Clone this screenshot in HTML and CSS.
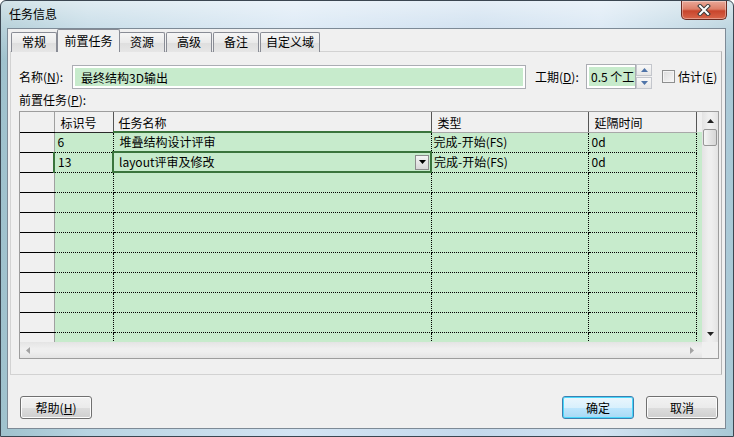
FILE: index.html
```html
<!DOCTYPE html>
<html lang="zh-CN">
<head>
    <meta charset="UTF-8">
    <title>任务信息</title>
    <link rel="stylesheet" href="styles.css">
</head>
<body>

<div class="window">
    <div class="titlebar">
        <span class="title">任务信息</span>
        <button class="close-btn" title="关闭">
            <svg width="16" height="12" viewBox="0 0 16 12">
                <path d="M4 2 L12 10 M12 2 L4 10" stroke="#3a3a3a" stroke-width="4" stroke-linecap="square"/>
                <path d="M4 2 L12 10 M12 2 L4 10" stroke="#fff" stroke-width="2" stroke-linecap="square"/>
            </svg>
        </button>
    </div>

    <div class="client">
        <div class="tabs">
            <div class="tab">常规</div>
            <div class="tab active">前置任务</div>
            <div class="tab">资源</div>
            <div class="tab">高级</div>
            <div class="tab">备注</div>
            <div class="tab">自定义域</div>
        </div>

        <div class="panel">
            <div class="field-row">
                <label class="lbl-name">名称(<u>N</u>):</label>
                <div class="textbox name-box"><span>最终结构3D输出</span></div>
                <label class="lbl-dur">工期(<u>D</u>):</label>
                <div class="textbox dur-box"><span>0.5 个工</span></div>
                <div class="spin">
                    <div class="spin-btn">
                        <svg width="7" height="4" viewBox="0 0 7 4"><path d="M0 4 L3.5 0 L7 4 Z" fill="#4f74a8"/></svg>
                    </div>
                    <div class="spin-btn">
                        <svg width="7" height="4" viewBox="0 0 7 4"><path d="M0 0 L3.5 4 L7 0 Z" fill="#4f74a8"/></svg>
                    </div>
                </div>
                <span class="checkbox"></span>
                <label class="lbl-est">估计(<u>E</u>)</label>
            </div>

            <div class="grid-label">前置任务(<u>P</u>):</div>

            <div class="grid">
                <div class="grid-main">
                    <div class="table-wrap">
                        <table class="pred-table">
                            <colgroup>
                                <col class="c-head">
                                <col class="c-id">
                                <col class="c-name">
                                <col class="c-type">
                                <col class="c-lag">
                                <col class="c-fill">
                            </colgroup>
                            <thead>
                                <tr>
                                    <th class="rowhead"></th>
                                    <th>标识号</th>
                                    <th class="col-active">任务名称</th>
                                    <th class="th-light">类型</th>
                                    <th class="th-light">延隔时间</th>
                                    <th class="th-fill"></th>
                                </tr>
                            </thead>
                            <tbody>
                                <tr>
                                    <td class="rowhead"></td>
                                    <td class="id">6</td>
                                    <td class="name">堆叠结构设计评审</td>
                                    <td class="type">完成-开始(FS)</td>
                                    <td class="lag">0d</td>
                                    <td class="fill"></td>
                                </tr>
                                <tr>
                                    <td class="rowhead"></td>
                                    <td class="id row-active">13</td>
                                    <td class="name cell-active">
                                        <div class="editor">
                                            <span class="editor-text">layout评审及修改</span>
                                            <span class="dropdown">
                                                <svg width="7" height="4" viewBox="0 0 7 4"><path d="M0 0 L3.5 4 L7 0 Z" fill="#000"/></svg>
                                            </span>
                                        </div>
                                    </td>
                                    <td class="type">完成-开始(FS)</td>
                                    <td class="lag">0d</td>
                                    <td class="fill"></td>
                                </tr>
                                <tr><td class="rowhead"></td><td></td><td></td><td></td><td></td><td class="fill"></td></tr>
                                <tr><td class="rowhead"></td><td></td><td></td><td></td><td></td><td class="fill"></td></tr>
                                <tr><td class="rowhead"></td><td></td><td></td><td></td><td></td><td class="fill"></td></tr>
                                <tr><td class="rowhead"></td><td></td><td></td><td></td><td></td><td class="fill"></td></tr>
                                <tr><td class="rowhead"></td><td></td><td></td><td></td><td></td><td class="fill"></td></tr>
                                <tr><td class="rowhead"></td><td></td><td></td><td></td><td></td><td class="fill"></td></tr>
                                <tr><td class="rowhead"></td><td></td><td></td><td></td><td></td><td class="fill"></td></tr>
                                <tr><td class="rowhead"></td><td></td><td></td><td></td><td></td><td class="fill"></td></tr>
                                <tr><td class="rowhead"></td><td></td><td></td><td></td><td></td><td class="fill"></td></tr>
                            </tbody>
                        </table>
                    </div>
                    <div class="vscroll">
                        <div class="sb-arrow">
                            <svg width="7" height="4" viewBox="0 0 7 4"><path d="M0 4 L3.5 0 L7 4 Z" fill="#222"/></svg>
                        </div>
                        <div class="sb-thumb"></div>
                        <div class="sb-track"></div>
                        <div class="sb-arrow">
                            <svg width="7" height="4" viewBox="0 0 7 4"><path d="M0 0 L3.5 4 L7 0 Z" fill="#222"/></svg>
                        </div>
                    </div>
                </div>
                <div class="hscroll">
                    <div class="hs-bar">
                        <svg width="4" height="7" viewBox="0 0 4 7"><path d="M4 0 L0 3.5 L4 7 Z" fill="#a3a3a3"/></svg>
                        <svg width="4" height="7" viewBox="0 0 4 7"><path d="M0 0 L4 3.5 L0 7 Z" fill="#a3a3a3"/></svg>
                    </div>
                    <div class="hs-corner"></div>
                </div>
            </div>
        </div>

        <div class="footer">
            <button class="btn">帮助(<u>H</u>)</button>
            <div class="spacer"></div>
            <button class="btn default">确定</button>
            <button class="btn">取消</button>
        </div>
    </div>
</div>

</body>
</html>
```

FILE: styles.css
```css
* {
    box-sizing: border-box;
}
html, body {
    margin: 0;
    padding: 0;
}
body {
    width: 734px;
    height: 437px;
    overflow: hidden;
    font-family: "Noto Sans CJK SC", "Noto Sans", sans-serif;
    font-size: 12px;
    color: #000;
    background: #fff;
}
u {
    text-decoration: underline;
}

/* window frame */
.window {
    width: 734px;
    height: 437px;
    display: flex;
    flex-direction: column;
    border: 1px solid #3b4651;
    border-radius: 6px 6px 0 0;
    background:
        linear-gradient(180deg, rgba(255,255,255,0.55) 0, rgba(255,255,255,0.25) 27px, rgba(255,255,255,0) 60px),
        linear-gradient(90deg, #9fc2cd 0, #b9d4e2 12%, #d3e4f3 40%, #c4d9ec 65%, #d2e3f2 82%, #a9c9d6 100%);
}
.titlebar {
    height: 27px;
    display: flex;
    align-items: flex-start;
    padding-left: 8px;
}
.title {
    line-height: 26px;
    font-size: 12px;
}
.close-btn {
    margin-left: auto;
    margin-right: 6px;
    width: 46px;
    height: 19px;
    padding: 0;
    border: 1px solid #6a2b22;
    border-top: none;
    border-radius: 0 0 5px 5px;
    background: linear-gradient(180deg, #e9a898 0, #dc7f69 45%, #c8452c 55%, #d8654a 100%);
    box-shadow: inset 0 0 0 1px rgba(255,255,255,0.35);
    display: flex;
    align-items: center;
    justify-content: center;
}

.client {
    flex: 1;
    margin: 0 7px 7px 6px;
    border: 1px solid #7d8a96;
    background: #f0f0f0;
    display: flex;
    flex-direction: column;
}

/* tabs */
.tabs {
    height: 23px;
    display: flex;
    align-items: flex-end;
    padding-left: 3px;
    margin-bottom: -1px;
    position: relative;
    z-index: 1;
}
.tab {
    height: 20px;
    min-width: 46px;
    margin-right: 1px;
    padding: 0 5px;
    border: 1px solid #898c95;
    border-bottom: none;
    border-radius: 2px 2px 0 0;
    background: linear-gradient(180deg, #f6f6f6 0, #eaeaea 50%, #dedede 51%, #e6e6e6 100%);
    text-align: center;
    line-height: 18px;
}
.tab.active {
    height: 23px;
    min-width: 63px;
    margin: 0 -1px 0 -1px;
    padding: 0 6px;
    background: #f0f0f0;
    line-height: 21px;
    position: relative;
    z-index: 2;
}

.panel {
    height: 324px;
    margin: 0 3px 0 2px;
    border: 1px solid #d2d2d2;
    border-right-color: #b4b4b4;
    background: #f0f0f0;
    padding: 12px 0 0 8px;
}

/* name / duration row */
.field-row {
    height: 25px;
    display: flex;
    align-items: center;
}
.lbl-name {
    width: 53px;
}
.textbox {
    height: 24px;
    border: 1px solid #abadb3;
    background: #fff;
    padding: 2px;
    overflow: hidden;
    white-space: nowrap;
}
.textbox span {
    display: block;
    height: 100%;
    background: #c7ebcc;
    line-height: 19px;
    padding-left: 6px;
    overflow: hidden;
}
.name-box {
    width: 454px;
}
.lbl-dur {
    margin-left: 9px;
    width: 51px;
}
.dur-box {
    width: 50px;
    height: 25px;
    padding: 2px 0 2px 2px;
}
.dur-box span {
    padding-left: 2px;
    line-height: 20px;
}
.spin {
    width: 16px;
    height: 25px;
    display: flex;
    flex-direction: column;
    gap: 1px;
}
.spin-btn {
    flex: 1;
    border: 1px solid #c3c6cc;
    background: linear-gradient(180deg, #f8f8f8, #e6e6e6);
    display: flex;
    align-items: center;
    justify-content: center;
}
.checkbox {
    width: 13px;
    height: 13px;
    margin-left: 10px;
    border: 1px solid #8e8f8f;
    background: linear-gradient(135deg, #dcdcdc, #f7f7f7);
    box-shadow: inset 0 0 0 1px #f4f4f4;
}
.lbl-est {
    margin-left: 3px;
}

.grid-label {
    margin-top: 3px;
    height: 19px;
    line-height: 16px;
}

/* predecessor grid */
.grid {
    width: 700px;
    border: 1px solid #9d9d9d;
    background: #f0f0f0;
}
.grid-main {
    display: flex;
    height: 230px;
}
.table-wrap {
    width: 682px;
    height: 230px;
    overflow: hidden;
    background: #c7ebcc;
}
.pred-table {
    width: 682px;
    table-layout: fixed;
    border-collapse: collapse;
}
.c-head { width: 34px; }
.c-id { width: 59px; }
.c-name { width: 318px; }
.c-type { width: 157px; }
.c-lag { width: 108px; }
.c-fill { width: 6px; }

.pred-table th {
    height: 20px;
    padding: 2px 0 0 6px;
    background: #f0f0f0;
    font-weight: normal;
    text-align: left;
    white-space: nowrap;
    border-right: 1px solid #555;
    border-bottom: 1px solid #2a2a2a;
    line-height: 17px;
}
.pred-table th.col-active {
    padding-left: 5px;
    border-bottom: 2px solid #3a743c;
}
.pred-table th.th-light {
    border-bottom: 1px solid #a8a8a8;
}
.pred-table th.th-fill {
    border-right: none;
    border-bottom: none;
    background: #f0f0f0;
}
.pred-table td {
    height: 20px;
    padding: 0 0 0 3px;
    border-right: 1px dotted #000;
    border-bottom: 1px dotted #000;
    background: #c7ebcc;
    white-space: nowrap;
    overflow: hidden;
    line-height: 18px;
}
.pred-table .rowhead {
    background: #f0f0f0;
    border-right: 1px solid #a0a0a0;
    border-bottom: 1px solid #000;
    padding: 0;
}
.pred-table td.name {
    padding-left: 6px;
}
.pred-table td.type {
    padding-left: 2px;
}
.pred-table td.fill {
    border-right: 1px solid #a0a0a0;
    border-bottom: none;
    padding: 0;
}
.pred-table td.row-active {
    border-left: 2px solid #3a743c;
}
.pred-table td.cell-active {
    border: 2px solid #3a743c;
    padding: 0 0 0 5px;
}
.editor {
    display: flex;
    align-items: center;
}
.editor-text {
    flex: 1;
}
.dropdown {
    width: 14px;
    height: 15px;
    margin-right: 1px;
    border: 1px solid #8c8c8c;
    background: linear-gradient(180deg, #f4f4f4, #d8d8d8);
    display: flex;
    align-items: center;
    justify-content: center;
}

/* scrollbars */
.vscroll {
    width: 16px;
    display: flex;
    flex-direction: column;
    background: linear-gradient(90deg, #e3e3e3, #efefef 40%, #efefef 60%, #e3e3e3);
}
.sb-arrow {
    height: 17px;
    display: flex;
    align-items: center;
    justify-content: center;
}
.sb-thumb {
    height: 17px;
    margin: 0 1px;
    border: 1px solid #979797;
    border-radius: 2px;
    background: linear-gradient(90deg, #f5f5f5, #e4e4e4 50%, #d6d6d6);
}
.sb-track {
    flex: 1;
}
.hscroll {
    height: 16px;
    display: flex;
}
.hs-bar {
    width: 682px;
    background: linear-gradient(180deg, #e4e4e4, #efefef 40%, #efefef 60%, #e4e4e4);
    display: flex;
    align-items: center;
    justify-content: space-between;
    padding: 0 8px 0 6px;
}
.hs-corner {
    flex: 1;
    background: #f0f0f0;
}

/* footer */
.footer {
    flex: 1;
    display: flex;
    align-items: flex-start;
    padding: 21px 7px 0 12px;
    gap: 12px;
}
.spacer {
    flex: 1;
}
.btn {
    width: 72px;
    height: 23px;
    padding: 0;
    font-family: inherit;
    font-size: 12px;
    color: #000;
    border: 1px solid #707070;
    border-radius: 3px;
    background: linear-gradient(180deg, #f2f2f2 0, #ebebeb 50%, #dddddd 51%, #cfcfcf 100%);
    box-shadow: inset 0 0 0 1px #fcfcfc;
}
.btn.default {
    border-color: #3c7fb1;
    box-shadow: inset 0 0 0 1px #48d8fb;
    background: linear-gradient(180deg, #eaf6fd 0, #d9f0fc 50%, #bee6fd 51%, #a7d9f5 100%);
}
```
